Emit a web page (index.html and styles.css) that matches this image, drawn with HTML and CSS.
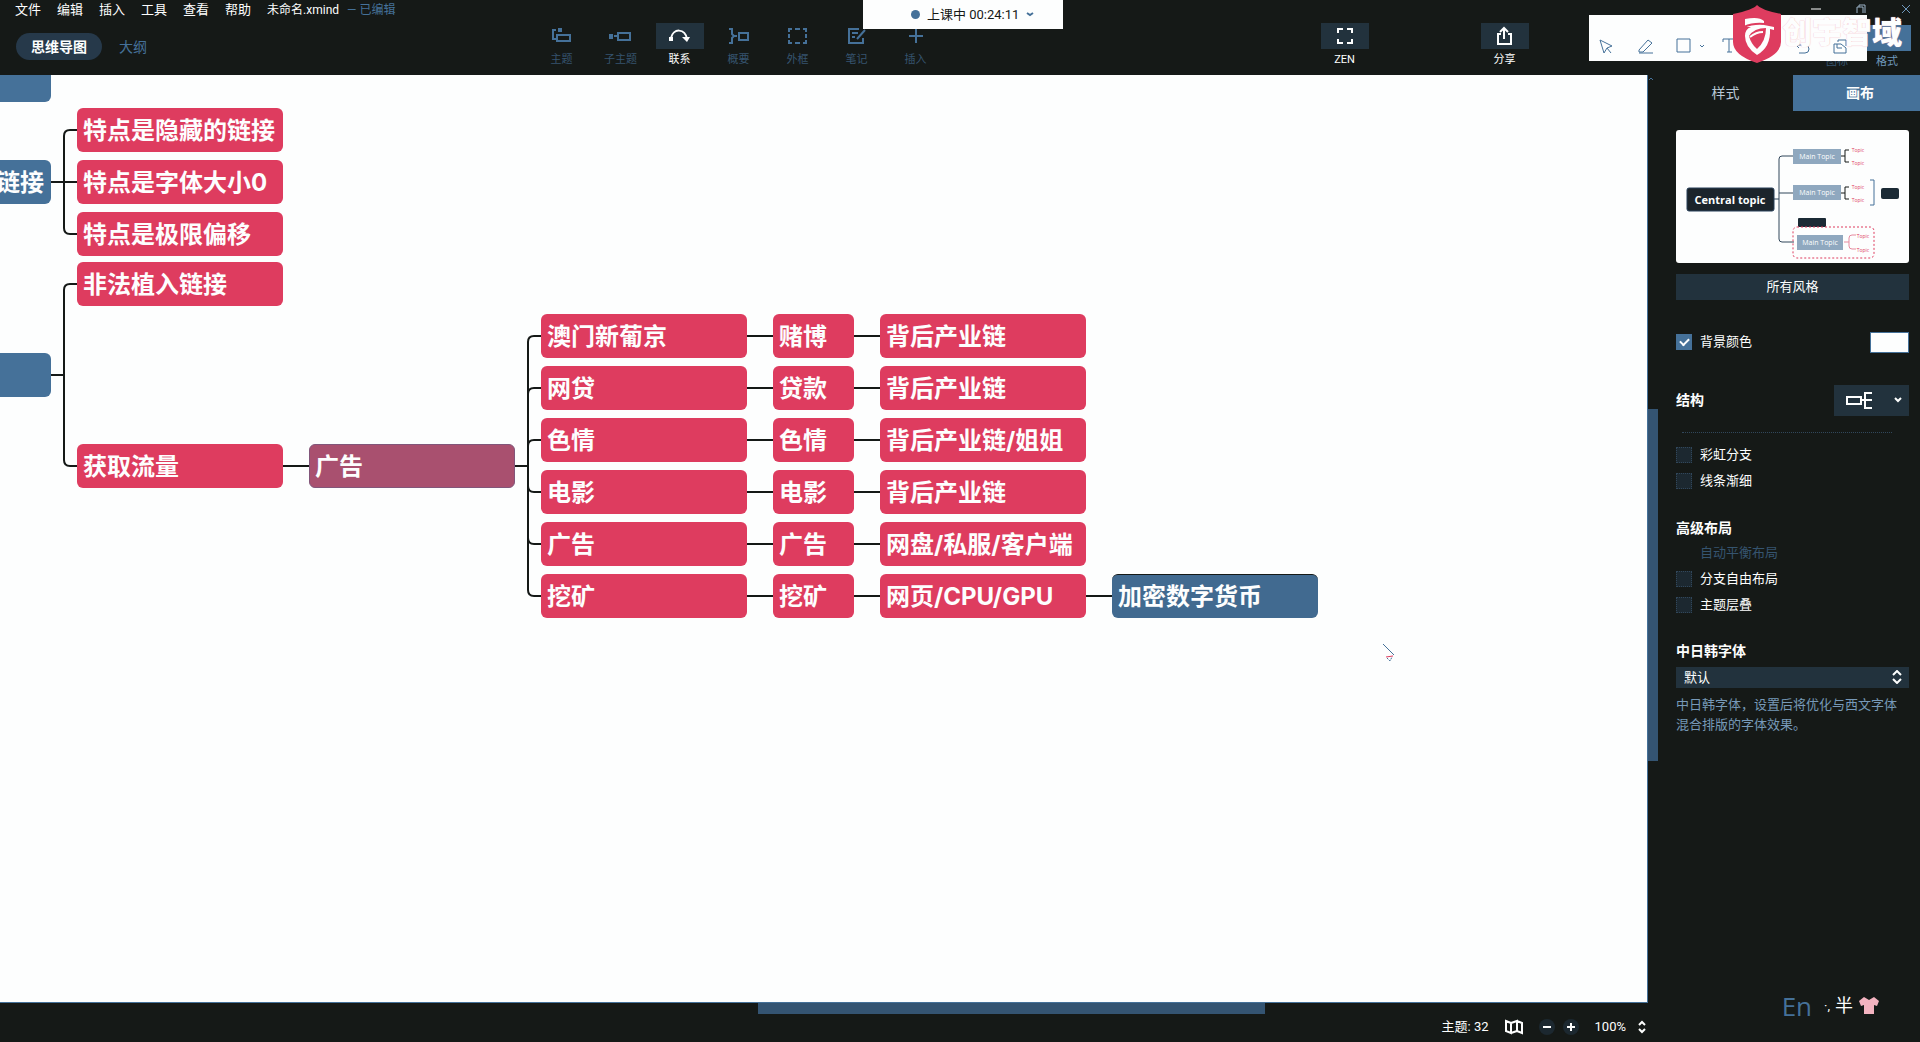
FILE: index.html
```html
<!DOCTYPE html>
<html lang="zh-CN">
<head>
<meta charset="utf-8">
<title>未命名.xmind</title>
<link rel="stylesheet" href="styles.css">
</head>
<body>
<header class="header">
  <nav class="menubar">
    <button>文件</button><button>编辑</button><button>插入</button><button>工具</button><button>查看</button><button>帮助</button>
    <span class="doc-name">未命名.xmind</span><span class="doc-state">— 已编辑</span>
  </nav>
  <div class="toolrow">
    <div class="views">
      <button class="view view-on">思维导图</button>
      <button class="view">大纲</button>
    </div>
    <div class="tools">
      <button class="tool"><span class="tool-icon"><svg width="24" height="20" fill="none" stroke="currentColor" stroke-width="2"><rect x="7" y="9" width="13" height="6"/><path d="M6 4H3v9h4"/><path d="M8 2h4v4H8z" fill="currentColor" stroke="none"/></svg></span>主题</button>
      <button class="tool"><span class="tool-icon"><svg width="24" height="20" fill="none" stroke="currentColor" stroke-width="2"><rect x="9" y="7" width="12" height="7"/><path d="M5 10h4"/><path d="M-1 8h5v5h-5z" fill="currentColor" stroke="none"/></svg></span>子主题</button>
      <button class="tool tool-on"><span class="tool-icon"><svg width="24" height="20" fill="none" stroke="currentColor" stroke-width="2"><path d="M3 12C5 2 17 2 19 13"/><path d="M1 11h4v4H1zM14 11h8l-3 5z" fill="currentColor" stroke="none"/></svg></span>联系</button>
      <button class="tool"><span class="tool-icon"><svg width="24" height="20" fill="none" stroke="currentColor" stroke-width="2"><path d="M2 3h3v5l2 2-2 2v5H2M7 10h3"/><rect x="12" y="7" width="9" height="7"/></svg></span>概要</button>
      <button class="tool"><span class="tool-icon"><svg width="24" height="20" fill="none" stroke="currentColor" stroke-width="2"><path d="M3 6V3h3M9 3h5M17 3h3v3M20 8v4M20 14v3h-3M14 17H9M6 17H3v-3M3 12V8"/></svg></span>外框</button>
      <button class="tool"><span class="tool-icon"><svg width="24" height="20" fill="none" stroke="currentColor" stroke-width="2"><path d="M14 3H4v14h14v-5M7 7h6M7 11h3M20 4l-8 9"/></svg></span>笔记</button>
      <button class="tool"><span class="tool-icon"><svg width="24" height="20" fill="none" stroke="currentColor" stroke-width="2"><path d="M12 3v14M5 10h14"/></svg></span>插入</button>
    </div>
    <button class="tool tool-on tool-zen"><span class="tool-icon"><svg width="24" height="20" fill="none" stroke="currentColor" stroke-width="2"><path d="M5 7V3h5M14 3h5v4M19 13v4h-5M10 17H5v-4"/></svg></span>ZEN</button>
    <button class="tool tool-on tool-share"><span class="tool-icon"><svg width="24" height="20" fill="none" stroke="currentColor" stroke-width="2"><path d="M8 8H5v10h13V8h-3M11 13V3M7 6l4-4 4 4"/></svg></span>分享</button>
    <button class="tool tool-panel"><span class="tool-icon"></span>图标</button>
    <button class="tool tool-panel tool-format"><span class="tool-icon"></span>格式</button>
  </div>
</header>

<main class="workspace">
  <section class="canvas">
    <svg class="links" width="1340" height="560" fill="none" stroke="#151917" stroke-width="2">
      <path d="M77 55h-7q-6 0-6 6v92q0 6 6 6h7M51 107h26"/>
      <path d="M77 209h-7q-6 0-6 6v170q0 6 6 6h7M51 300h13M282 391h27"/>
      <path d="M541 261h-7q-6 0-6 6v248q0 6 6 6h7M515 391h13"/>
      <path d="M541 313h-7q-6 0-6 6M541 365h-7q-6 0-6 6M541 417h-7q-6 0-6-6M541 469h-7q-6 0-6-6"/>
      <path d="M747 261h26M747 313h26M747 365h26M747 417h26M747 469h26M747 521h26"/>
      <path d="M854 261h26M854 313h26M854 365h26M854 417h26M854 469h26M854 521h26M1086 521h26"/>
    </svg>
    <div class="node node-blue n-cut n-cut-a"></div>
    <div class="node node-blue n-cut n-cut-b">链接</div>
    <div class="node node-blue n-cut n-cut-c"></div>
    <div class="node c1 t1">特点是隐藏的链接</div>
    <div class="node c1 t2">特点是字体大小0</div>
    <div class="node c1 t3">特点是极限偏移</div>
    <div class="node c1 t4">非法植入链接</div>
    <div class="node c1 t5">获取流量</div>
    <div class="node node-mixed c2 t5">广告</div>
    <div class="node c3 r1">澳门新葡京</div><div class="node c4 r1">赌博</div><div class="node c5 r1">背后产业链</div>
    <div class="node c3 r2">网贷</div><div class="node c4 r2">贷款</div><div class="node c5 r2">背后产业链</div>
    <div class="node c3 r3">色情</div><div class="node c4 r3">色情</div><div class="node c5 r3">背后产业链/姐姐</div>
    <div class="node c3 r4">电影</div><div class="node c4 r4">电影</div><div class="node c5 r4">背后产业链</div>
    <div class="node c3 r5">广告</div><div class="node c4 r5">广告</div><div class="node c5 r5">网盘/私服/客户端</div>
    <div class="node c3 r6">挖矿</div><div class="node c4 r6">挖矿</div><div class="node c5 r6">网页/CPU/GPU</div>
    <div class="node node-blue node-dark c6 r6">加密数字货币</div>
    <svg class="pointer" width="14" height="20" fill="none" stroke="#457199"><path d="M1 1l11 11"/><path d="M4 14l7-1" stroke="#de3c5f"/><path d="M5 15l3 3 2-4" stroke-dasharray="2 1"/></svg>
  </section>
  <div class="vscroll"><svg width="6" height="4" fill="none" stroke="#457199"><path d="M1 3l2-2 2 2"/></svg><div class="vthumb"></div></div>
  <div class="hscroll"><div class="hthumb"></div></div>
  <footer class="status">
    <span class="count">主题: 32</span>
    <button aria-label="导航图"><svg width="18" height="16" fill="none" stroke="currentColor" stroke-width="2"><path d="M1 2l5 2v10l-5-2zM6 4l6-2v10l-6 2M12 2l5 2v10l-5-2"/></svg></button>
    <span class="zooms">
      <button class="zoom" aria-label="缩小"><svg width="8" height="8" stroke="currentColor" stroke-width="2"><path d="M0 4h8"/></svg></button>
      <button class="zoom" aria-label="放大"><svg width="8" height="8" stroke="currentColor" stroke-width="2"><path d="M0 4h8M4 0v8"/></svg></button>
    </span>
    <button class="percent">100%<svg width="8" height="14" fill="none" stroke="currentColor" stroke-width="2"><path d="M1 5l3-3 3 3M1 9l3 3 3-3"/></svg></button>
  </footer>
  <aside class="panel">
    <div class="tabs"><button class="tab">样式</button><button class="tab tab-on">画布</button></div>
    <div class="panel-body">
      <svg class="preview" viewBox="0 0 233 133" fill="none">
        <rect width="233" height="133" rx="3" fill="#fdfefe"/>
        <path d="M98 69h5M117 26h-11q-3 0-3 3v80q0 3 3 3h12M103 63h14" stroke="#31475b"/>
        <path d="M165 26h4M173 20h-4v12h4M165 63h4M173 57h-4v12h4" stroke="#151917"/>
        <path d="M168 112h5M180 105h-4q-3 0-3 3v8q0 3 3 3h4" stroke="#e68a9f"/>
        <path d="M194 50h4v25h-4" stroke="#457199"/>
        <rect x="11" y="58" width="87" height="23" rx="2" fill="#1b242b" stroke="#28405a"/>
        <text x="54" y="74" class="pv-center">Central topic</text>
        <rect x="117" y="19" width="48" height="15" fill="#8fa8bf"/><rect x="117" y="55" width="48" height="15" fill="#8fa8bf"/><rect x="121" y="105" width="46" height="15" fill="#8fa8bf"/>
        <text x="141" y="29" class="pv-main">Main Topic</text><text x="141" y="65" class="pv-main">Main Topic</text><text x="144" y="115" class="pv-main">Main Topic</text>
        <text x="182" y="22" class="pv-sub">Topic</text><text x="182" y="35" class="pv-sub">Topic</text><text x="182" y="59" class="pv-sub">Topic</text><text x="182" y="72" class="pv-sub">Topic</text><text x="187" y="108" class="pv-sub">Topic</text><text x="187" y="122" class="pv-sub">Topic</text>
        <rect x="205" y="58" width="18" height="11" rx="2" fill="#1b2a35"/><rect x="122" y="88" width="28" height="9" rx="1" fill="#1b2a35"/>
        <rect x="117" y="97" width="81" height="31" rx="4" stroke="#de3c5f" stroke-dasharray="2 2"/>
      </svg>
      <button class="wide">所有风格</button>
      <div class="row row-bg"><label class="check"><input type="checkbox" checked>背景颜色</label><button class="swatch" aria-label="颜色"></button></div>
      <div class="row row-structure"><h2>结构</h2><button class="structure" aria-label="结构"><svg width="28" height="18" fill="none" stroke="currentColor" stroke-width="2"><rect x="1" y="6" width="14" height="7"/><path d="M15 9h11M26 2h-7v15h7"/></svg><svg width="8" height="6" fill="none" stroke="currentColor" stroke-width="2"><path d="M1 1l3 3 3-3"/></svg></button></div>
      <hr>
      <div class="checks">
        <label class="check"><input type="checkbox">彩虹分支</label>
        <label class="check"><input type="checkbox">线条渐细</label>
      </div>
      <h2>高级布局</h2>
      <div class="checks checks-adv">
        <label class="check check-off"><input type="checkbox" disabled>自动平衡布局</label>
        <label class="check"><input type="checkbox">分支自由布局</label>
        <label class="check"><input type="checkbox">主题层叠</label>
      </div>
      <h2><label for="cjk">中日韩字体</label></h2>
      <div class="select"><select id="cjk"><option>默认</option></select><svg width="10" height="14" fill="none" stroke="currentColor" stroke-width="2"><path d="M1 5l4-4 4 4M1 9l4 4 4-4"/></svg></div>
      <p class="hint">中日韩字体，设置后将优化与西文字体混合排版的字体效果。</p>
    </div>
  </aside>
</main>

<button class="timer"><i class="timer-dot"></i>上课中 00:24:11<svg width="8" height="5" fill="none" stroke="#457199" stroke-width="2"><path d="M1 1l3 2 3-2"/></svg></button>

<div class="window-buttons">
  <button aria-label="最小化"><svg width="10" height="10" stroke="#fdfefe"><path d="M0 5h10"/></svg></button>
  <button aria-label="还原"><svg width="10" height="10" fill="none" stroke="#9db4c9"><path d="M1 9V3h6v6M3 3V1h6v8"/></svg></button>
  <button aria-label="关闭"><svg width="10" height="10" stroke="#6f97bb"><path d="M1 1l8 8M9 1L1 9"/></svg></button>
</div>

<div class="annotate">
  <svg width="278" height="46" fill="none" stroke="#457199" stroke-width="1"><path d="M11 25l4 13 3-5 5-2zM18 33l4 5"/><path d="M50 35l9-10 4 3-9 9h-4zM50 38h14" /><path d="M88 24h13v13H88zM111 30l2 2 2-2"/><path d="M134 27v-3h12v3M140 24v13M138 37h5"/><path d="M207 30h9q4 0 4 4t-4 4h-6M210 26l-3 4 3 3"/><path d="M245 29h7l5 4v5h-12zM248 29v4h5M249 27v-2h8v6"/></svg>
</div>
<div class="brand">
  <svg width="50" height="58"><path d="M25 0q4 5 24 9v28q0 13-24 21Q1 50 1 37V9Q21 5 25 0z" fill="#de3c5f"/><path d="M13 14q14-3 19 2v4l10 2v3l-4-1q1 18-13 26Q13 42 13 31q0-7 6-9l-6 0z" fill="#fdfefe"/><path d="M17 31q5-8 17-8 0 13-9 21-6-5-8-13z" fill="#de3c5f"/><path d="M12 22q9-4 20-3M19 33q5-4 12-4" stroke="#de3c5f" stroke-width="2" fill="none"/><path d="M18 32q6-5 13-5" stroke="#fdfefe" stroke-width="2" fill="none"/></svg>
  <span>创宇智域</span>
</div>
<div class="ime"><span class="ime-lang">En</span><span class="ime-mark">·,</span><span class="ime-half">半</span><svg width="22" height="20"><path d="M6 1l5 3 5-3 5 4-2 5-3-1v9H6V9l-3 1-2-5z" fill="#f3b3c0"/></svg></div>
</body>
</html>
```

FILE: styles.css
```css
:root {
  --ink: #151917;
  --paper: #fdfefe;
  --blue: #457199;
  --pink: #de3c5f;
  --raised: #22323d;
}
* { box-sizing: border-box; }
body {
  margin: 0;
  height: 100vh;
  display: flex;
  flex-direction: column;
  overflow: hidden;
  background: var(--ink);
  color: var(--paper);
  font: 13px/20px Roboto, "Noto Sans CJK SC", sans-serif;
}
button { border: 0; padding: 0; background: none; color: inherit; font: inherit; }
svg { display: block; }
h2 { margin: 0; font-size: 14px; line-height: 20px; font-weight: 700; }

.header { flex: none; height: 75px; }
.menubar { display: flex; height: 20px; padding-left: 15px; gap: 16px; }
.doc-name, .doc-state { font-size: 12px; }
.doc-state { margin-left: -8px; color: var(--blue); }
.toolrow { display: flex; padding: 3px 8px 0 0; }
.views { flex: none; width: 532px; padding: 10px 0 0 16px; display: flex; gap: 17px; }
.view { height: 27px; font-size: 14px; color: var(--blue); }
.view-on { width: 86px; border-radius: 14px; background: #26394a; color: var(--paper); font-weight: 700; }
.tools { display: flex; }
.tool { width: 59px; display: flex; flex-direction: column; align-items: center; font-size: 11px; line-height: 22px; color: #35546f; }
.tool-icon { width: 48px; height: 26px; display: flex; align-items: center; justify-content: center; color: var(--blue); }
.tool-on, .tool-on .tool-icon { color: var(--paper); }
.tool-on .tool-icon { background: var(--raised); }
.tool-zen { margin-left: auto; margin-right: 101px; }
.tool-share { margin-right: 278px; }
.tool-panel { width: 50px; padding-top: 2px; }
.tool-format { color: #6f97bb; }
.tool-format .tool-icon { background: var(--blue); }

.workspace {
  flex: 1;
  min-height: 0;
  display: grid;
  grid-template-columns: minmax(0, 1fr) 10px 262px;
  grid-template-rows: minmax(0, 1fr) 11px 28px;
}
.canvas { position: relative; overflow: hidden; background: var(--paper); border-right: 1px solid var(--blue); border-bottom: 1px solid var(--blue); }
.links, .node, .pointer { position: absolute; }
.links { left: 0; top: 0; }
.pointer { left: 1382px; top: 568px; }
.node { height: 44px; padding-left: 6px; border-radius: 6px; background: var(--pink); font-family: Inter, "Noto Sans CJK SC", sans-serif; font-size: 24px; line-height: 45px; font-weight: 700; white-space: nowrap; }
.node-blue { background: var(--blue); }
.node-mixed { background: #a9506f; border: 1px solid #82567a; padding-left: 5px; line-height: 43px; }
.node-dark { background: #416a90; border-top: 1px solid var(--ink); line-height: 43px; }
.n-cut { left: -155px; width: 206px; padding-right: 7px; text-align: right; }
.n-cut-a { top: -17px; } .n-cut-b { top: 85px; } .n-cut-c { top: 278px; }
.c1 { left: 77px; width: 206px; }
.c2 { left: 309px; width: 206px; }
.c3 { left: 541px; width: 206px; }
.c4 { left: 773px; width: 81px; }
.c5 { left: 880px; width: 206px; }
.c6 { left: 1112px; width: 206px; }
.t1 { top: 33px; } .t2 { top: 85px; } .t3 { top: 137px; } .t4 { top: 187px; } .t5 { top: 369px; }
.r1 { top: 239px; } .r2 { top: 291px; } .r3 { top: 343px; } .r4 { top: 395px; } .r5 { top: 447px; } .r6 { top: 499px; }

.vscroll { display: flex; flex-direction: column; padding-top: 2px; }
.vthumb { margin-top: 328px; height: 38%; background: #345472; }
.hscroll { grid-column: 1; grid-row: 2; }
.hthumb { margin-left: 46%; width: 507px; height: 11px; background: #345472; }
.status { grid-column: 1 / 3; grid-row: 3; display: flex; align-items: center; justify-content: flex-end; gap: 16px; padding: 0 12px 3px 0; }
.zooms { display: flex; gap: 8px; }
.zoom { width: 16px; height: 16px; border-radius: 8px; background: #1c2830; display: grid; place-items: center; }
.percent { display: flex; align-items: center; gap: 12px; }

.panel { grid-column: 3; grid-row: 1 / 4; }
.tabs { display: grid; grid-template-columns: 1fr 127px; height: 36px; }
.tab { font-size: 14px; color: #b9c8d6; }
.tab-on { padding-left: 7px; background: var(--blue); color: var(--paper); font-weight: 700; }
.panel-body { padding: 19px 11px 0 18px; display: flex; flex-direction: column; }
.preview { width: 100%; }
.pv-center { font: 700 11px "Open Sans", sans-serif; fill: #fdfefe; text-anchor: middle; }
.pv-main { font: 7px "Open Sans", sans-serif; fill: #fdfefe; text-anchor: middle; }
.pv-sub { font: 5px "Open Sans", sans-serif; fill: #de3c5f; text-anchor: middle; }
.wide { height: 26px; margin-top: 11px; background: var(--raised); }
.row { display: flex; align-items: center; justify-content: space-between; }
.row-bg { margin-top: 30px; height: 24px; }
.swatch { width: 39px; height: 21px; background: var(--paper); border: 1px solid var(--blue); }
.row-structure { margin-top: 30px; height: 32px; }
.structure { width: 75px; height: 31px; padding: 0 7px 0 12px; display: flex; align-items: center; justify-content: space-between; background: var(--raised); }
hr { width: 90%; margin: 16px auto 0 6px; border: 0; border-top: 1px dotted #31475b; }
.checks { display: grid; gap: 6px; margin: 12px 0 27px; }
.checks-adv { margin: 5px 0 26px; }
.check { display: flex; align-items: center; gap: 8px; height: 20px; }
.check input { appearance: none; width: 16px; height: 16px; margin: 0; background: #1c2830; border: 1px dotted #31475b; }
.check input:checked { border: 0; background: var(--blue); display: grid; place-items: center; }
.check input:checked::before { content: ""; width: 7px; height: 4px; margin-top: -2px; border: solid var(--paper); border-width: 0 0 2px 2px; transform: rotate(-45deg); }
.check-off { color: #35546f; }
.check-off input { visibility: hidden; }
.select { position: relative; margin-top: 6px; }
.select select { appearance: none; display: block; width: 100%; height: 21px; padding: 0 8px; border: 0; border-radius: 0; background: var(--raised); color: inherit; font: inherit; }
.select svg { position: absolute; right: 7px; top: 3px; }
.hint { margin: 7px 0 0; line-height: 20px; color: #7799b8; }

.timer { position: absolute; left: 863px; top: 0; width: 200px; height: 29px; padding-left: 48px; display: flex; align-items: center; gap: 7px; background: var(--paper); color: var(--ink); }
.timer-dot { width: 9px; height: 9px; border-radius: 50%; background: var(--blue); }
.window-buttons { position: absolute; right: 9px; top: 4px; display: flex; gap: 35px; }
.annotate { position: absolute; right: 53px; top: 15px; background: var(--paper); }
.brand { position: absolute; right: 18px; top: 5px; display: flex; font-size: 30px; line-height: 56px; font-weight: 900; text-shadow: 0 0 1px #f0a8b8; }
.ime { position: absolute; right: 40px; bottom: 22px; display: flex; align-items: center; gap: 5px; height: 28px; }
.ime-lang { margin-right: 7px; font-size: 26px; color: var(--blue); font-family: "Open Sans", sans-serif; }
.ime-half { font-size: 18px; }
```
